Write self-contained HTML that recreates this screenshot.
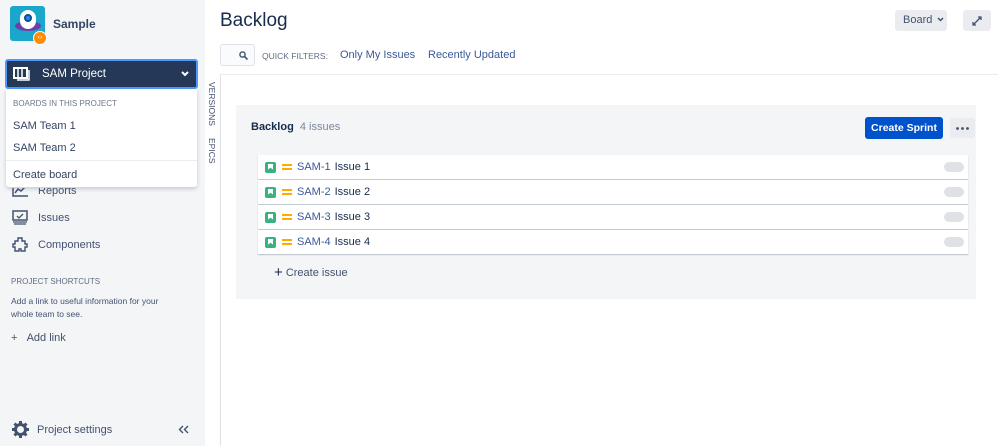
<!DOCTYPE html>
<html><head><style>
*{box-sizing:border-box;margin:0;padding:0}
body{width:998px;height:446px;overflow:hidden;background:#fff;font-family:"Liberation Sans",sans-serif;color:#172b4d;position:relative;font-size:11px}
.abs{position:absolute}
.side{left:0;top:0;width:205px;height:446px;background:#f4f5f7}
.nav{left:12px;font-size:11px;color:#42526e;display:flex;align-items:center}
.row{position:absolute;left:258px;width:710px;height:24px;background:#fff;box-shadow:0 1px 1px rgba(9,30,66,.25);display:flex;align-items:center;font-size:11px}
.row .t{width:11px;height:11px;background:#36b37e;margin-left:7px;border-radius:2px;position:relative}
.row .t:after{content:"";position:absolute;left:3px;top:2px;width:5px;height:6px;background:#fff;clip-path:polygon(0 0,100% 0,100% 100%,50% 70%,0 100%)}
.row .p{width:10px;margin-left:6px;height:6px;border-top:2px solid #ffab00;border-bottom:2px solid #ffab00}
.row .k{color:#3b5998;margin-left:5px}
.row .n{margin-left:4px;color:#172b4d}
.row .e{position:absolute;right:4px;top:7px;width:20px;height:10px;border-radius:5px;background:#dfe1e6}
</style></head><body>
<div class="abs side"></div>
<div class="abs" style="left:10px;top:6px;width:35px;height:35px;background:#1ba6cc;border-radius:3px;overflow:hidden">
 <div class="abs" style="left:5px;top:15px;width:26px;height:10px;background:#6f3fa8;border-radius:50%"></div>
 <div class="abs" style="left:10px;top:4px;width:16px;height:19px;background:#fff;border-radius:8px"></div>
 <div class="abs" style="left:14px;top:8px;width:8px;height:8px;background:#2684ff;border-radius:50%;border:2px solid #0a4f8f"></div>
</div>
<div class="abs" style="left:33px;top:31px;width:14px;height:14px;border-radius:50%;background:#ff8b00;border:1.5px solid #fff;color:#fff;font-size:7px;text-align:center;line-height:11px">‹›</div>
<div class="abs" style="left:53px;top:17px;font-size:12px;font-weight:bold;color:#344563">Sample</div>
<div class="abs" style="left:5px;top:59px;width:193px;height:30px;background:#253858;border-radius:3px;border:2px solid #4c9aff;color:#fff;display:flex;align-items:center">
 <svg width="18" height="14" style="margin-left:6px" viewBox="0 0 18 14"><rect x="1" y="1" width="13" height="10" fill="none" stroke="#fff" stroke-width="2"/><path d="M5 1v10M9 1v10M16 3v10H4" fill="none" stroke="#fff" stroke-width="1.5"/></svg>
 <span style="margin-left:11px;font-size:11.5px">SAM Project</span>
 <svg class="abs" style="right:7px;top:10px" width="8" height="6" viewBox="0 0 8 6"><path d="M1 1l3 3 3-3" fill="none" stroke="#fff" stroke-width="2"/></svg>
</div>
<div class="abs" style="left:6px;top:89px;width:191px;height:98px;background:#fff;box-shadow:0 2px 4px rgba(9,30,66,.2);border-radius:0 0 3px 3px"></div>
<div class="abs" style="left:13px;top:99px;font-size:8px;color:#6b778c">BOARDS IN THIS PROJECT</div>
<div class="abs" style="left:13px;top:120px;font-size:11px;color:#344563">SAM Team 1</div>
<div class="abs" style="left:13px;top:142px;font-size:11px;color:#344563">SAM Team 2</div>
<div class="abs" style="left:6px;top:160px;width:191px;height:1px;background:#ebecf0"></div>
<div class="abs" style="left:13px;top:169px;font-size:11px;color:#344563">Create board</div>
<div class="abs nav" style="top:185px;clip-path:inset(3px 0 0 0)"><svg width="16" height="12" viewBox="0 0 16 12"><path d="M1 0v11h15M3 8l3-4 3 2 4-4" fill="none" stroke="#42526e" stroke-width="1.5"/></svg><span style="margin-left:10px">Reports</span></div>
<div class="abs nav" style="top:210px"><svg width="16" height="15" viewBox="0 0 16 15"><rect x="1" y="1" width="14" height="9" fill="none" stroke="#42526e" stroke-width="1.5"/><path d="M5 6l2 2 4-4M1 12h14M2 14h12" stroke="#42526e" stroke-width="1.3" fill="none"/></svg><span style="margin-left:10px">Issues</span></div>
<div class="abs nav" style="top:237px"><svg width="16" height="16" viewBox="0 0 16 16"><path d="M6 1h4v3h3v3h2v3h-2v4H9v-2H7v2H3v-4H1V7h2V4h3z" fill="none" stroke="#42526e" stroke-width="1.4"/></svg><span style="margin-left:10px">Components</span></div>
<div class="abs" style="left:11px;top:277px;font-size:8px;color:#5e6c84">PROJECT SHORTCUTS</div>
<div class="abs" style="left:11px;top:295px;font-size:8.5px;color:#42526e;line-height:13px">Add a link to useful information for your<br>whole team to see.</div>
<div class="abs" style="left:11px;top:332px;font-size:11px;color:#42526e">+&nbsp;&nbsp;&nbsp;Add link</div>
<svg class="abs" style="left:12px;top:421px" width="17" height="17" viewBox="0 0 17 17"><circle cx="8.5" cy="8.5" r="5" fill="none" stroke="#42526e" stroke-width="3"/><g stroke="#42526e" stroke-width="3"><path d="M8.5 0v3M8.5 14v3M0 8.5h3M14 8.5h3M2.5 2.5l2 2M12.5 12.5l2 2M2.5 14.5l2-2M12.5 4.5l2-2"/></g><circle cx="8.5" cy="8.5" r="2.5" fill="#f4f5f7"/></svg>
<div class="abs" style="left:37px;top:424px;font-size:11px;color:#42526e">Project settings</div>
<svg class="abs" style="left:178px;top:425px" width="11" height="9" viewBox="0 0 11 9"><path d="M5 1L1.5 4.5 5 8M10 1L6.5 4.5 10 8" fill="none" stroke="#42526e" stroke-width="1.4"/></svg>
<div class="abs" style="left:220px;top:74px;width:1px;height:372px;background:#dfe1e6"></div>
<div class="abs" style="left:220px;top:74px;width:778px;height:1px;background:#ebecf0"></div>
<div class="abs" style="left:207px;top:82px;writing-mode:vertical-rl;font-size:8.5px;color:#42526e">VERSIONS</div>
<div class="abs" style="left:207px;top:138px;writing-mode:vertical-rl;font-size:8.5px;color:#42526e">EPICS</div>
<div class="abs" style="left:220px;top:10px;font-size:19px;color:#172b4d">Backlog</div>
<div class="abs" style="left:220px;top:44px;width:35px;height:22px;border:1px solid #dfe1e6;border-radius:3px;background:#fafbfc"><svg class="abs" style="left:18px;top:6px" width="9" height="9" viewBox="0 0 9 9"><circle cx="3.5" cy="3.5" r="2.6" fill="none" stroke="#42526e" stroke-width="1.4"/><path d="M5.5 5.5L8.5 8.5" stroke="#42526e" stroke-width="1.6"/></svg></div>
<div class="abs" style="left:262px;top:51px;font-size:8.5px;color:#5e6c84">QUICK FILTERS:</div>
<div class="abs" style="left:340px;top:49px;font-size:11px;color:#3b5998">Only My Issues</div>
<div class="abs" style="left:428px;top:49px;font-size:11px;color:#3b5998">Recently Updated</div>
<div class="abs" style="left:895px;top:10px;width:52px;height:21px;background:#ebecf0;border-radius:3px;font-size:11px;color:#42526e;line-height:21px;padding-left:8px">Board<svg style="margin-left:5px;vertical-align:1px" width="7" height="5" viewBox="0 0 7 5"><path d="M1 1l2.5 2.5L6 1" fill="none" stroke="#42526e" stroke-width="1.5"/></svg></div>
<div class="abs" style="left:963px;top:10px;width:28px;height:21px;background:#ebecf0;border-radius:3px"><svg class="abs" style="left:9px;top:6px" width="10" height="10" viewBox="0 0 10 10"><path d="M1 9L9 1M6 1h3v3M1 6v3h3" fill="none" stroke="#42526e" stroke-width="1.3"/></svg></div>
<div class="abs" style="left:236px;top:105px;width:740px;height:194px;background:#f4f5f7"></div>
<div class="abs" style="left:251px;top:121px;font-size:11px;font-weight:bold;color:#172b4d">Backlog <span style="font-weight:normal;color:#7a869a;margin-left:3px">4 issues</span></div>
<div class="abs" style="left:865px;top:117px;width:78px;height:22px;background:#0052cc;border-radius:3px;color:#fff;font-size:10.5px;font-weight:bold;text-align:center;line-height:22px">Create Sprint</div>
<div class="abs" style="left:950px;top:118px;width:25px;height:20px;background:#ebecf0;border-radius:3px"><svg class="abs" style="left:6px;top:9px" width="13" height="3" viewBox="0 0 13 3"><circle cx="1.5" cy="1.5" r="1.4" fill="#42526e"/><circle cx="6.5" cy="1.5" r="1.4" fill="#42526e"/><circle cx="11.5" cy="1.5" r="1.4" fill="#42526e"/></svg></div>
<div class="row" style="top:155px"><span class="t"></span><span class="p"></span><span class="k">SAM-1</span><span class="n">Issue 1</span><span class="e"></span></div>
<div class="row" style="top:180px"><span class="t"></span><span class="p"></span><span class="k">SAM-2</span><span class="n">Issue 2</span><span class="e"></span></div>
<div class="row" style="top:205px"><span class="t"></span><span class="p"></span><span class="k">SAM-3</span><span class="n">Issue 3</span><span class="e"></span></div>
<div class="row" style="top:230px"><span class="t"></span><span class="p"></span><span class="k">SAM-4</span><span class="n">Issue 4</span><span class="e"></span></div>
<div class="abs" style="left:274px;top:263px;font-size:11px;color:#42526e"><span style="font-size:15px;color:#172b4d;position:relative;top:1px">+</span> Create issue</div>
</body></html>
